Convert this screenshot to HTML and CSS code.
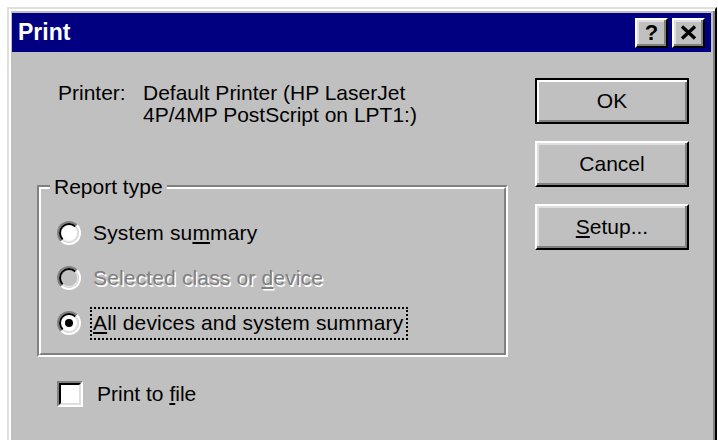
FILE: index.html
```html
<!DOCTYPE html>
<html lang="en">
<head>
<meta charset="utf-8">
<title>Print</title>
<link rel="stylesheet" href="styles.css">
</head>
<body>
<div class="window">
  <div class="titlebar">
    <span class="title">Print</span>
    <div class="caption-buttons">
      <button class="cap-btn help">?</button>
      <button class="cap-btn close">
        <svg width="17" height="15" viewBox="0 0 17 15"><path d="M2 1.5 L15 13.5 M15 1.5 L2 13.5" stroke="#000" stroke-width="3.4" fill="none"/></svg>
      </button>
    </div>
  </div>
  <div class="dialog">
    <div class="main">
      <div class="printer">
        <span class="label">Printer:</span>
        <span class="value">Default Printer (HP LaserJet<br>4P/4MP PostScript on LPT1:)</span>
      </div>
      <div class="group">
        <span class="legend">Report type</span>
        <div class="group-inner">
          <div class="option">
            <span class="radio"><span class="radio-well"></span></span>
            <span class="opt-label">System su<u>m</u>mary</span>
          </div>
          <div class="option disabled">
            <span class="radio"><span class="radio-well"></span></span>
            <span class="opt-label">Selected class or <u>d</u>evice</span>
          </div>
          <div class="option">
            <span class="radio"><span class="radio-well"><span class="dot"></span></span></span>
            <span class="opt-label focus"><u>A</u>ll devices and system summary</span>
          </div>
        </div>
      </div>
      <div class="option check-row">
        <span class="checkbox"><span class="check-well"></span></span>
        <span class="check-label">Print to <u>f</u>ile</span>
      </div>
    </div>
    <div class="actions">
      <button class="btn default">OK</button>
      <button class="btn">Cancel</button>
      <button class="btn"><u>S</u>etup...</button>
    </div>
  </div>
</div>
</body>
</html>
```

FILE: styles.css
```css
html, body {
  margin: 0;
  padding: 0;
  background: #fff;
  overflow: hidden;
}

body {
  font-family: "Liberation Sans", Arial, sans-serif;
  font-size: 21px;
  color: #000;
}

/* Window frame with the classic raised bevel */
.window {
  box-sizing: border-box;
  margin: 7px 0 0 7px;
  width: 710px;
  height: 450px;
  padding: 4px 4px 0 3px;
  background: #c0c0c0;
  border: 2px solid;
  border-color: #dfdfdf #000 #000 #dfdfdf;
  box-shadow: inset 2px 2px #fff, inset -2px -2px #808080;
}

.titlebar {
  height: 39px;
  background: #000080;
  display: flex;
  align-items: center;
  justify-content: space-between;
  padding: 0 6px;
}

.title {
  color: #fff;
  font-weight: bold;
  font-size: 23px;
}

.caption-buttons {
  display: flex;
  gap: 4px;
}

.cap-btn {
  box-sizing: border-box;
  width: 33px;
  height: 30px;
  padding: 0;
  display: flex;
  align-items: center;
  justify-content: center;
  background: #c0c0c0;
  border: 2px solid;
  border-color: #fff #000 #000 #fff;
  box-shadow: inset -2px -2px #808080, inset 2px 2px #dfdfdf;
  font-family: "Liberation Sans", Arial, sans-serif;
  font-weight: bold;
  font-size: 22px;
  color: #000;
}

/* Dialog client area */
.dialog {
  display: flex;
  padding-left: 25px;
}

.main {
  width: 471px;
  padding-top: 30px;
}

.printer {
  display: flex;
  margin-left: 21px;
  line-height: 22px;
  white-space: nowrap;
}

.printer .label {
  width: 85px;
  flex: none;
}

/* Etched group box */
.group {
  position: relative;
  margin-top: 59px;
  border: 2px solid;
  border-color: #808080 #fff #fff #808080;
}

.group-inner {
  border: 2px solid;
  border-color: #fff #808080 #808080 #fff;
  padding: 27.5px 0 13.5px 16px;
  display: flex;
  flex-direction: column;
  gap: 12px;
}

.legend {
  position: absolute;
  top: -11px;
  left: 11px;
  padding: 0 4px;
  line-height: 22px;
  background: #c0c0c0;
}

.option {
  display: flex;
  align-items: center;
  height: 33px;
}

.opt-label {
  margin-left: 9px;
  padding: 3.5px 3px 3.5px 1px;
  line-height: 22px;
  letter-spacing: 0.15px;
  border: 2px solid transparent;
  white-space: nowrap;
}

.opt-label.focus {
  border: 2px dotted #000;
}

.disabled .opt-label {
  color: #808080;
  text-shadow: 1.5px 1.5px 0 #fff;
}

/* Radio button: sunken two-ring circle */
.radio {
  box-sizing: border-box;
  width: 24px;
  height: 24px;
  flex: none;
  border-radius: 50%;
  border: 2px solid;
  border-color: #808080 #fff #fff #808080;
  display: flex;
}

.radio-well {
  box-sizing: border-box;
  flex: 1;
  border-radius: 50%;
  border: 2px solid;
  border-color: #000 #dfdfdf #dfdfdf #000;
  background: #fff;
  display: flex;
  align-items: center;
  justify-content: center;
}

.disabled .radio-well {
  background: #c0c0c0;
}

.dot {
  width: 8px;
  height: 8px;
  border-radius: 50%;
  background: #000;
}

/* Check box */
.check-row {
  margin-top: 20.5px;
  margin-left: 20px;
}

.checkbox {
  box-sizing: border-box;
  width: 26px;
  height: 26px;
  flex: none;
  border: 2px solid;
  border-color: #808080 #fff #fff #808080;
  display: flex;
}

.check-well {
  flex: 1;
  border: 2px solid;
  border-color: #000 #dfdfdf #dfdfdf #000;
  background: #fff;
}

.check-label {
  margin-left: 14px;
  line-height: 22px;
}

/* Command buttons */
.actions {
  margin-left: 27px;
  padding-top: 26px;
  display: flex;
  flex-direction: column;
  gap: 17px;
}

.btn {
  box-sizing: border-box;
  width: 154px;
  height: 46px;
  padding: 0;
  background: #c0c0c0;
  border: 2px solid;
  border-color: #fff #000 #000 #fff;
  box-shadow: inset -2px -2px #808080, inset 2px 2px #dfdfdf;
  font-family: "Liberation Sans", Arial, sans-serif;
  font-size: 21px;
  color: #000;
}

.btn.default {
  border-color: #000;
  box-shadow: inset 2px 2px #fff, inset -2px -2px #808080;
}
```
